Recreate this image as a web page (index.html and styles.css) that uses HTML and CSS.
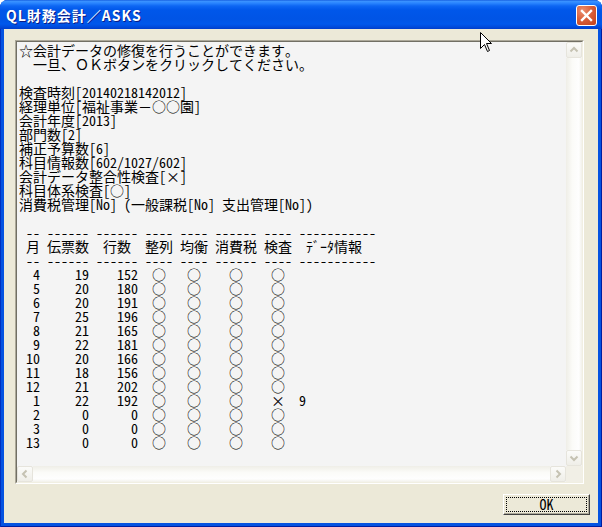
FILE: index.html
```html
<!DOCTYPE html>
<html lang="ja">
<head>
    <meta charset="UTF-8">
    <title>QL財務会計／ASKS</title>
    <link rel="stylesheet" href="styles.css">
</head>
<body>
    <div class="window">
        <div class="titlebar">
            <span class="title">QL財務会計／ASKS</span>
            <button class="close" aria-label="閉じる">
                <svg width="13" height="13" viewBox="0 0 13 13">
                    <path d="M2 2 L11 11 M11 2 L2 11" stroke="#fff" stroke-width="2.4" stroke-linecap="square" fill="none"/>
                </svg>
            </button>
        </div>

        <div class="client">
            <div class="textbox">
                <div class="textbox-inner">
<pre class="text">☆会計データの修復を行うことができます。
　一旦、ＯＫボタンをクリックしてください。

検査時刻[20140218142012]
経理単位[福祉事業－○○園]
会計年度[2013]
部門数[2]
補正予算数[6]
科目情報数[602/1027/602]
会計データ整合性検査[<span class="fw">×</span>]
科目体系検査[○]
消費税管理[No] (一般課税[No] 支出管理[No])

 -- ------ ------ ---- ---- ------ ---- -----------
 月 伝票数  行数  整列 均衡 消費税 検査  ﾃﾞｰﾀ情報
 -- ------ ------ ---- ---- ------ ---- -----------
  4     19    152  ○   ○    ○    ○
  5     20    180  ○   ○    ○    ○
  6     20    191  ○   ○    ○    ○
  7     25    196  ○   ○    ○    ○
  8     21    165  ○   ○    ○    ○
  9     22    181  ○   ○    ○    ○
 10     20    166  ○   ○    ○    ○
 11     18    156  ○   ○    ○    ○
 12     21    202  ○   ○    ○    ○
  1     22    192  ○   ○    ○    <span class="fw">×</span>  9
  2      0      0  ○   ○    ○    ○
  3      0      0  ○   ○    ○    ○
 13      0      0  ○   ○    ○    ○</pre>

                    <div class="vscroll">
                        <span class="sbtn">
                            <svg width="14" height="14" viewBox="0 0 14 14"><polyline points="3.5,8.5 7,5 10.5,8.5" /></svg>
                        </span>
                        <span class="vtrack"></span>
                        <span class="sbtn">
                            <svg width="14" height="14" viewBox="0 0 14 14"><polyline points="3.5,5.5 7,9 10.5,5.5" /></svg>
                        </span>
                    </div>
                    <div class="hscroll">
                        <span class="sbtn">
                            <svg width="14" height="14" viewBox="0 0 14 14"><polyline points="8.5,3.5 5,7 8.5,10.5" /></svg>
                        </span>
                        <span class="htrack"></span>
                        <span class="sbtn">
                            <svg width="14" height="14" viewBox="0 0 14 14"><polyline points="5.5,3.5 9,7 5.5,10.5" /></svg>
                        </span>
                    </div>
                    <div class="corner"></div>
                </div>
            </div>

            <div class="actions">
                <button class="ok"><span>OK</span></button>
            </div>
        </div>

        <!-- mouse pointer -->
        <svg class="cursor" width="13" height="21" viewBox="0 0 13 21">
            <path d="M0.5 0.5 L0.5 16.5 L4.5 12.5 L7.5 19.5 L9.5 18.5 L6.5 11.5 L11.5 11.5 Z" fill="#fff" stroke="#000" stroke-width="1"/>
        </svg>
    </div>
</body>
</html>
```

FILE: styles.css
```css
:root {
    --face: #ece9d8;
    --box-bg: #f4f4f4;
    --dim: #c5c2b2;
}

* {
    margin: 0;
    padding: 0;
    box-sizing: border-box;
}

body {
    width: 602px;
    height: 527px;
    overflow: hidden;
    background: #fff;
}

.window {
    position: relative;
    width: 602px;
    height: 527px;
    display: flex;
    flex-direction: column;
    background: #0553e1;
    border-radius: 8px 8px 0 0;
    box-shadow: inset 1px 0 #0030c0, inset -1px 0 #001ea0, inset 0 -1px #001ea0;
}

/* title bar */
.titlebar {
    height: 29px;
    display: flex;
    align-items: center;
    justify-content: space-between;
    padding: 1px 5px 0 6px;
    border-radius: 7px 7px 0 0;
    background: linear-gradient(to bottom,
        #0a4fd8 0px, #3d95ff 1px, #2b86ff 3px, #0d66f3 6px,
        #0057ea 10px, #0054e5 19px, #0058ec 24px, #004adb 27px, #003dca 29px);
}

.title {
    color: #fff;
    font: bold 14px "Noto Sans CJK JP", sans-serif;
    letter-spacing: 1px;
    text-shadow: 1px 1px #0a1c86;
}

.close {
    width: 21px;
    height: 21px;
    display: flex;
    align-items: center;
    justify-content: center;
    border: 1px solid #fff;
    border-radius: 3px;
    background: radial-gradient(circle at 30% 25%, #ec8f70, #d9603b 45%, #c2401a 100%);
}

/* client area */
.client {
    flex: 1;
    margin: 0 4px 4px;
    background: var(--face);
    display: flex;
    flex-direction: column;
    padding: 11px 0 0 11px;
}

.textbox {
    width: 569px;
    height: 444px;
    border: 1px solid;
    border-color: #aca899 #fff #fff #aca899;
}

.textbox-inner {
    height: 100%;
    display: grid;
    grid-template-columns: 1fr 16px;
    grid-template-rows: 1fr 16px;
    border: 1px solid;
    border-color: #716f64 #f1efe2 #f1efe2 #716f64;
    background: var(--box-bg);
}

.text {
    font: 14px/14px "Noto Sans Mono CJK JP", "Noto Sans CJK JP", monospace;
    color: #000;
    padding: 1px 2px;
    white-space: pre;
    overflow: hidden;
}

.fw {
    display: inline-block;
    width: 14px;
    text-align: center;
}

/* disabled scrollbars */
.vscroll,
.hscroll {
    display: flex;
}

.vscroll {
    flex-direction: column;
}

.vtrack {
    flex: 1;
    background: linear-gradient(to right, #efeee7, #fbfbf8 40%, #fefefe 80%, #f2f1ea);
}

.htrack {
    flex: 1;
    background: linear-gradient(to bottom, #efeee7, #fbfbf8 40%, #fefefe 80%, #f2f1ea);
}

.sbtn {
    width: 16px;
    height: 16px;
    display: flex;
    align-items: center;
    justify-content: center;
    border: 1px solid #e6e4dc;
    border-radius: 2px;
    background: linear-gradient(to bottom, #fbfbf9, #efeee8);
}

.sbtn polyline {
    fill: none;
    stroke: var(--dim);
    stroke-width: 2;
}

.corner {
    background: #f1efe6;
}

/* button row */
.actions {
    display: flex;
    justify-content: flex-end;
    padding: 10px 8px 0 0;
}

.ok {
    width: 87px;
    height: 21px;
    padding: 2px;
    background: var(--face);
    border: 1px solid;
    border-color: #fff #404040 #404040 #fff;
    box-shadow: inset -1px -1px #aca899;
    font: 14px "Noto Sans Mono CJK JP", "Noto Sans CJK JP", monospace;
    color: #000;
}

.ok span {
    display: block;
    height: 100%;
    line-height: 13px;
    border: 1px dotted #000;
}

.cursor {
    position: absolute;
    left: 480px;
    top: 32px;
}
```
